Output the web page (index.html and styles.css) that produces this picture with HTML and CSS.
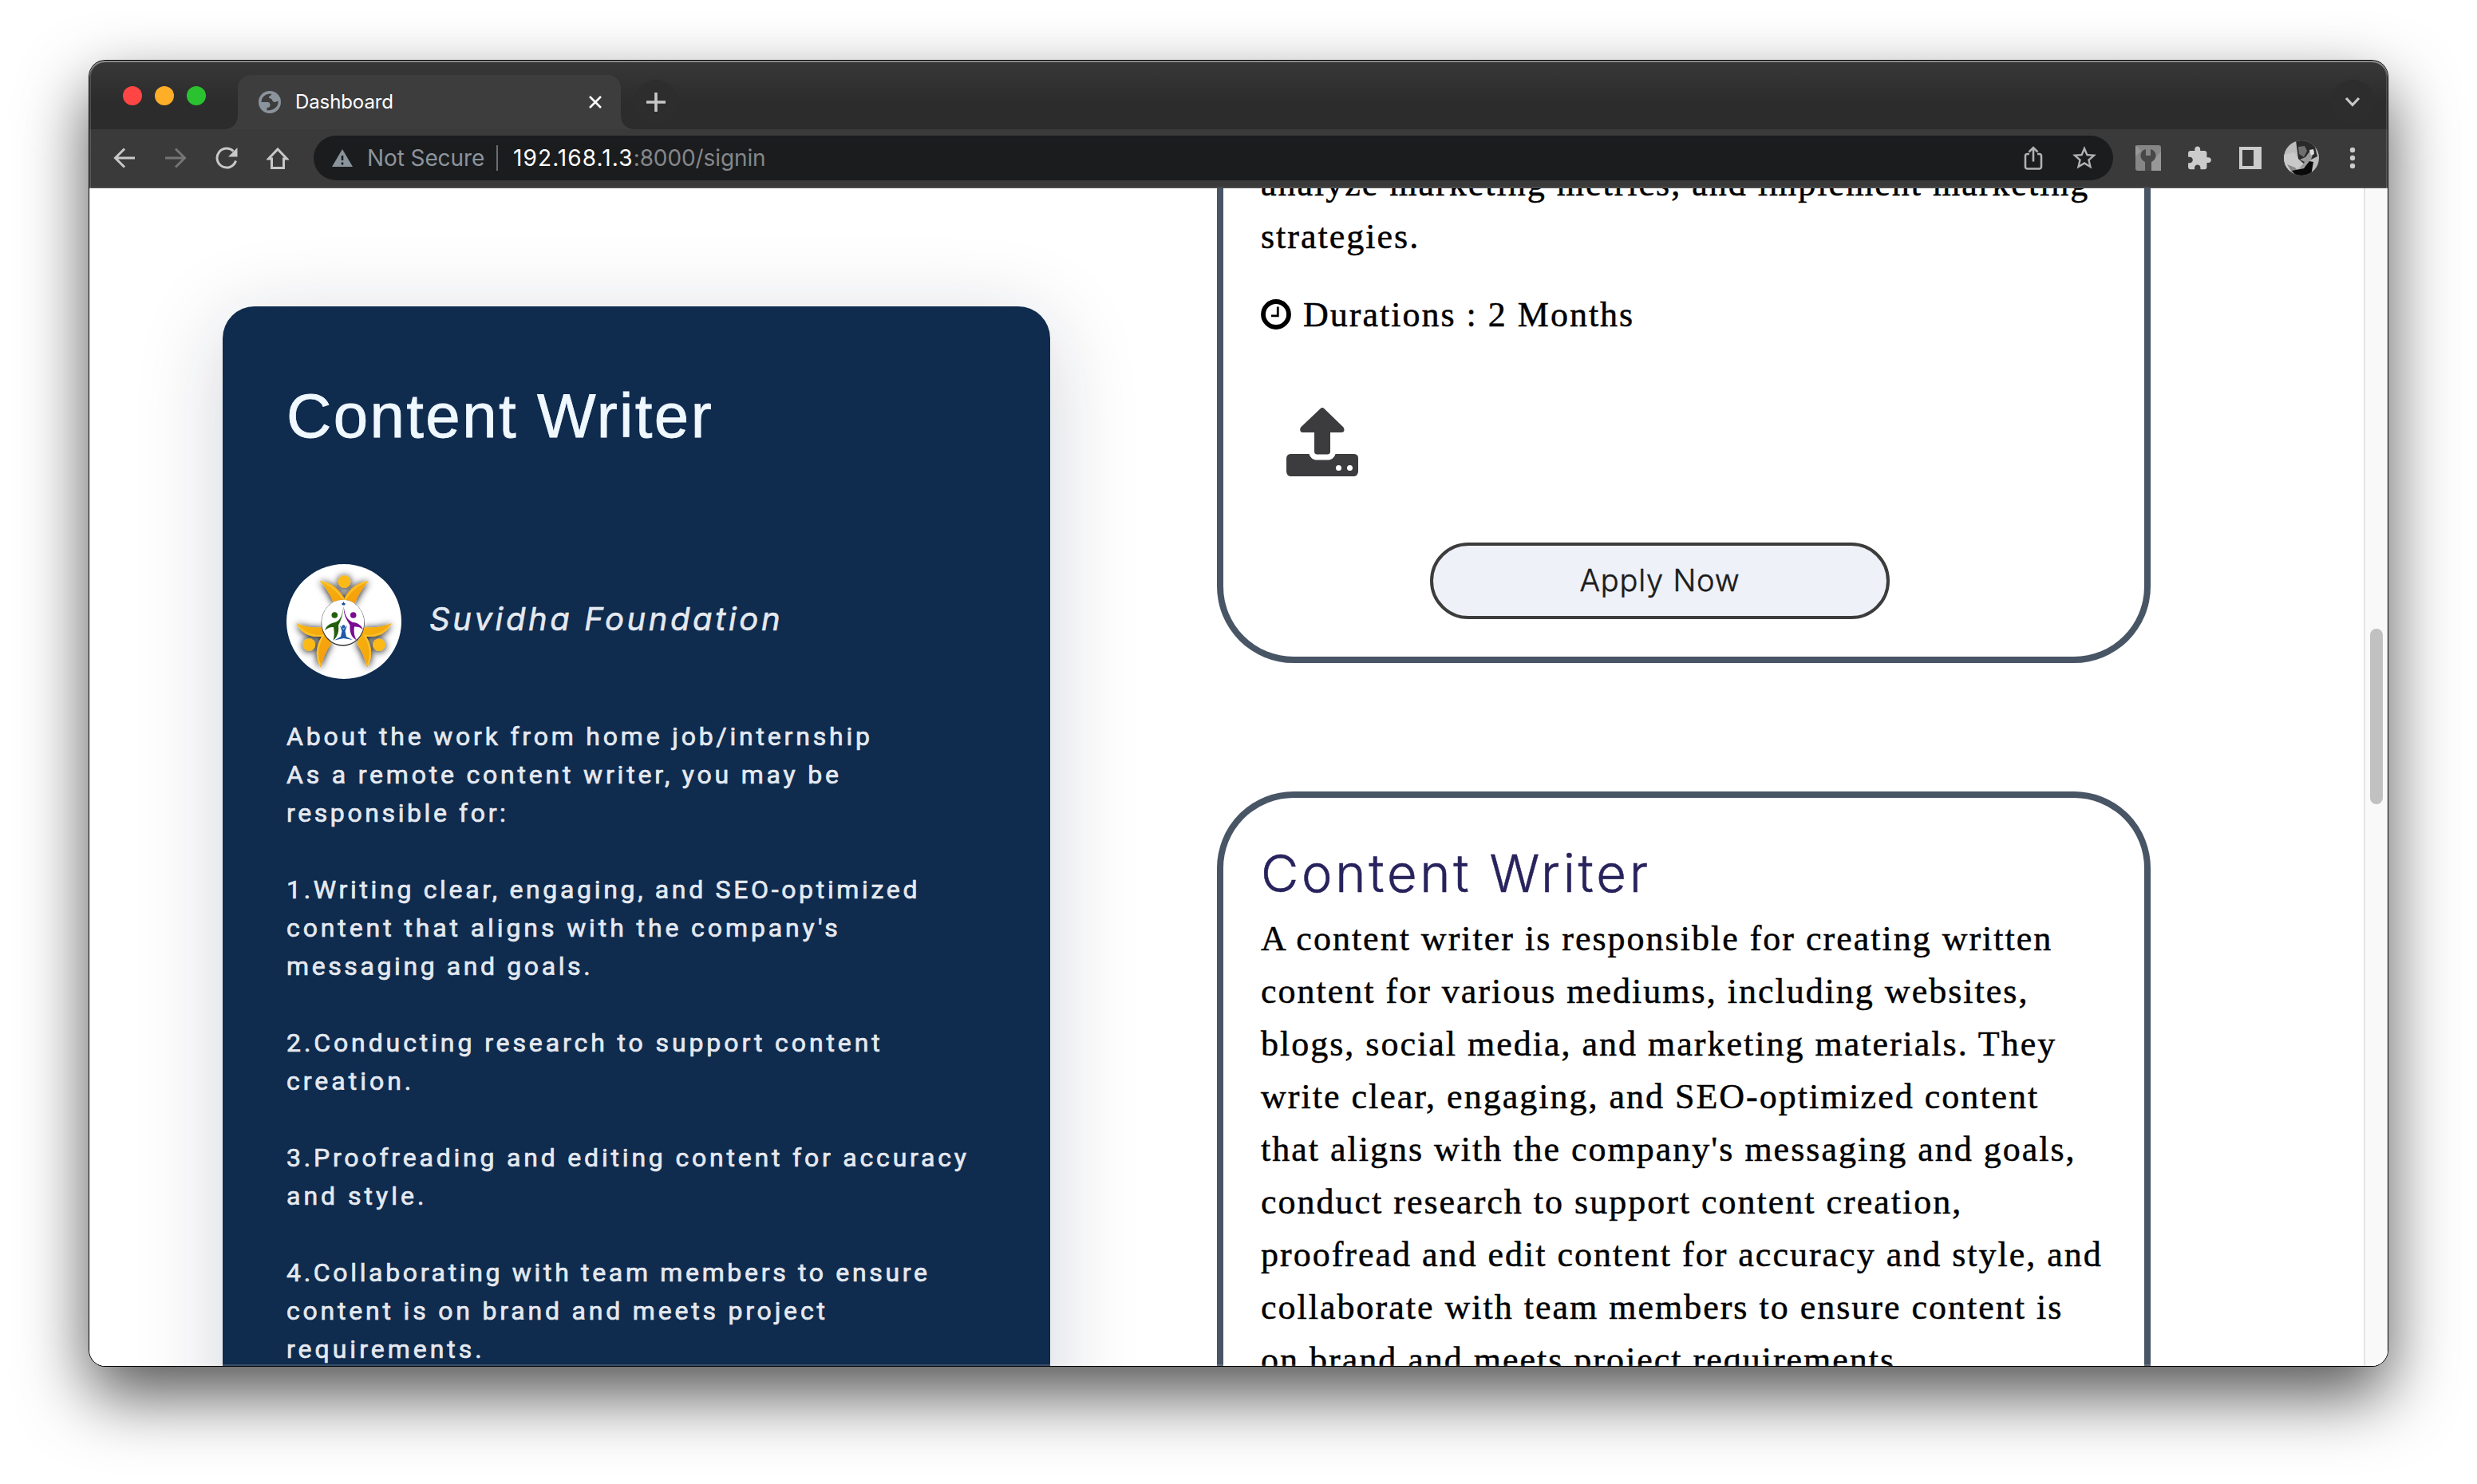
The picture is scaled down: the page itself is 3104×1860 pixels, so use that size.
FILE: index.html
```html
<!DOCTYPE html>
<html lang="en">
<head>
<meta charset="utf-8">
<title>Dashboard</title>
<link rel="stylesheet" href="styles.css">
</head>
<body>
<div class="window">
  <header class="tabstrip">
    <div class="lights"><i class="red"></i><i class="yellow"></i><i class="green"></i></div>
    <div class="tab">
      <svg class="globe" viewBox="0 0 28 28"><circle cx="14" cy="14" r="14" fill="#8b949c"/><path d="M3.500 14C3.500 8 8 3.500 16 3.500c1 2.500-3 2-3 4.500 0 2 4 1 4 3.500 1 3 4 3 7.500 1 1 6-4 12-14 12V21c2.500 0 4-1 4-3 0-3-1-4-4-4z" fill="#3c3c3c"/></svg>
      <span class="tab-title">Dashboard</span>
      <svg class="close" viewBox="0 0 16 16"><path d="M1 1l14 14M15 1L1 15" stroke="#fff" stroke-width="2.600"/></svg>
    </div>
    <div class="round plus"><svg width="24" height="24" viewBox="0 0 24 24"><path d="M12 0v24M0 12h24" stroke="#c8c8c8" stroke-width="3.600"/></svg></div>
    <div class="round chevron"><svg width="20" height="14" viewBox="0 0 20 14"><path d="M2 2l8 8.500L18 2" fill="none" stroke="#c8c8c8" stroke-width="3.200"/></svg></div>
  </header>
  <nav class="toolbar">
    <div class="slot"><svg width="28" height="28" viewBox="0 0 28 28"><path d="M27 14H3M14 2.500L2.500 14 14 25.500" fill="none" stroke="#c8c8c8" stroke-width="3"/></svg></div>
    <div class="slot"><svg width="28" height="28" viewBox="0 0 28 28"><path d="M1 14h24M14 2.500L25.500 14 14 25.500" fill="none" stroke="#757575" stroke-width="3"/></svg></div>
    <div class="slot"><svg width="28" height="28" viewBox="0 0 28 28"><path d="M25.500 17.500a12 12 0 1 1-3-12" fill="none" stroke="#c8c8c8" stroke-width="3"/><path d="M27.500 1v11.500H16z" fill="#c8c8c8"/></svg></div>
    <div class="slot"><svg width="28" height="28" viewBox="0 0 28 28"><path d="M2.500 15L14 3l11.500 12H21.500v11.500h-15V15z" fill="none" stroke="#c8c8c8" stroke-width="3"/></svg></div>
    <div class="omnibox">
      <svg class="warn" viewBox="0 0 26 22"><path d="M13 0l13 22H0z" fill="#8b949c"/><path d="M13 8v6M13 16.500v3" stroke="#1c1d1f" stroke-width="2.600"/></svg>
      <span class="insecure">Not Secure</span>
      <span class="divider"></span>
      <span class="url"><b>192.168.1.3</b>:8000/signin</span>
      <div class="slot"><svg width="24" height="30" viewBox="0 0 24 30"><path d="M7 10H4.500a2.500 2.500 0 0 0-2.500 2.500V26a2.500 2.500 0 0 0 2.500 2.500h15A2.500 2.500 0 0 0 22 26V12.500a2.500 2.500 0 0 0-2.500-2.500H17M12 19.500V3M6.500 7.500L12 2l5.500 5.500" fill="none" stroke="#b0b1b2" stroke-width="2.600"/></svg></div>
      <div class="slot"><svg width="36" height="36" viewBox="0 0 24 24"><path d="M22 9.240l-7.190-.620L12 2 9.190 8.630 2 9.240l5.460 4.730L5.820 21 12 17.270 18.180 21l-1.630-7.030L22 9.240zM12 15.400l-3.760 2.270 1-4.280-3.320-2.880 4.380-.380L12 6.100l1.710 4.040 4.380.380-3.320 2.880 1 4.280L12 15.400z" fill="#b0b1b2"/></svg></div>
    </div>
    <div class="slot"><svg width="32" height="32" viewBox="0 0 32 32"><rect width="32" height="32" rx="3" fill="#868686"/><path d="M0 0l7 7-7 7zM32 8v24H20V20z" fill="#989898"/><path d="M13 5v8h6V5c4 1 6.500 4 6.500 8 0 3.500-2 6.500-5.500 8v11h-8V21c-3.500-1.500-5.500-4.500-5.500-8 0-4 2.500-7 6.500-8z" fill="#484848"/></svg></div>
    <div class="slot"><svg width="33" height="33" viewBox="0.500 0 24 24"><path d="M20.500 11H19V7c0-1.100-.900-2-2-2h-4V3.500C13 2.120 11.880 1 10.500 1S8 2.120 8 3.500V5H4c-1.100 0-1.990.900-1.990 2v3.800H3.500c1.490 0 2.700 1.210 2.700 2.700s-1.210 2.700-2.700 2.700H2V20c0 1.100.900 2 2 2h3.800v-1.500c0-1.490 1.210-2.700 2.700-2.700s2.700 1.210 2.700 2.700V22H17c1.100 0 2-.900 2-2v-4h1.500c1.380 0 2.500-1.120 2.500-2.500S21.880 11 20.500 11z" fill="#cbcbcb"/></svg></div>
    <div class="slot"><svg width="28" height="28" viewBox="0 0 28 28"><path fill-rule="evenodd" d="M0 0h28v28H0zM4 4v20h14V4z" fill="#cbcbcb"/></svg></div>
    <div class="slot"><svg class="avatar" viewBox="0 0 44 44"><rect width="44" height="44" fill="#bdbdbd"/><path d="M15 0h18l6 8 3 12-8 4-8 6-8-7z" fill="#2a2a2a"/><path d="M18 8l8-1 3 6-4 8-6-4z" fill="#6f6f6f"/><path d="M0 18l13-3 6 10 5 5-9 6-9 4L0 34z" fill="#c9c9c9"/><path d="M4 30l10 4 6 8-10-2z" fill="#888"/><path d="M20 24l6 3-7 9 9-3 6-9 4-11-5 0-6 8z" fill="#9a9a9a"/><path d="M32 12l5-1 1 6-4 2z" fill="#ddd"/><path d="M10 38l15-3 7-9 5 1-3 17H15z" fill="#0a0a0a"/></svg></div>
    <div class="slot"><svg width="8" height="28" viewBox="0 0 8 28"><g fill="#cbcbcb"><circle cx="4" cy="4" r="3.200"/><circle cx="4" cy="14" r="3.200"/><circle cx="4" cy="24" r="3.200"/></g></svg></div>
  </nav>
  <main class="page">
    <section class="detail">
      <h1>Content Writer</h1>
      <div class="org">
        <svg class="logo" viewBox="0 0 144 144">
          <defs>
            <filter id="soft" x="-30%" y="-30%" width="160%" height="160%"><feDropShadow dx="0" dy="1" stdDeviation="5" flood-color="#000" flood-opacity="1"/></filter>
            <linearGradient id="gold" x1="0" y1="0" x2="1" y2="1"><stop offset="0" stop-color="#f6b512"/><stop offset="1" stop-color="#f59a0c"/></linearGradient>
          </defs>
          <circle cx="72" cy="72" r="72" fill="#fff"/>
          <g filter="url(#soft)">
            <g fill="#fdb913"><circle cx="72.500" cy="22" r="7.800"/><circle cx="28.300" cy="101" r="7.800"/><circle cx="116" cy="101.300" r="7.800"/></g>
            <g fill="url(#gold)">
              <path d="M41.700 21C54 22 65 30 72.500 43 79 30 91 22 103 21 96 29 90 38 86 49H59C55 38 49 29 41.700 21z"/>
              <path d="M12.300 73.700C23 79 33 80 46 79l10 21C49 109 46 119 42.700 129.700 36 117 36 104 44.500 90.500 29 93 18 86 12.300 73.700z"/>
              <path d="M131.700 73.700C121 79 111 80 98 79L88 100C95 109 98 119 101.300 129.700 108 117 108 104 99.500 90.500 115 93 126 86 131.700 73.700z"/>
            </g>
          </g>
          <g fill="none" stroke="#fcc32b" stroke-width="2">
            <path d="M43 22C55 25 64 33 72.500 46 80 33 89 25 102 22"/>
            <path d="M14 76C22 87 33 91 46 89.500 38 103 37 115 42.500 127"/>
            <path d="M130 76C122 87 111 91 98 89.500 106 103 107 115 101.500 127"/>
          </g>
          <ellipse cx="70.700" cy="73.800" rx="27.200" ry="29" fill="#333"/>
          <ellipse cx="70.700" cy="73" rx="26.600" ry="28.300" fill="#fff"/>
          <g fill="#245e0c"><circle cx="60.300" cy="64" r="3.800"/><path d="M71.300 53C71 62 69 69 65 77c1 8-1 14-6.500 19 1.500-6 1.500-10 .500-17-4-.500-7 1-11 4 2-6 7-9 13-10 6-2 9-8 10.300-20z"/></g>
          <g fill="#7a0c93"><circle cx="83.700" cy="64" r="3.800"/><path d="M71.700 53C73 64 76 70 83 73c6 0 11 4 13 9-4-3-7-4-11-3.500-1 7 0 12 3 17-7-4-9-10-8.500-19-5-8-8-13-7.800-23.500z"/></g>
          <path d="M70.500 49l1-2 1 2 1.500.500-1 2h-3l-1-2z" fill="#1a4e9e"/>
          <g fill="#1f58a8"><circle cx="71.500" cy="78.500" r="2.200"/><path d="M67 77l4.500 5 4.500-5-2.500 7 1.500 7 8 4-11.500-2L60 95.500l8-4.500 1.500-7z"/></g>
        </svg>
        <span class="org-name">Suvidha Foundation</span>
      </div>
      <div class="about">
        <div>About the work from home job/internship</div>
        <div>As a remote content writer, you may be</div>
        <div class="tight">responsible for:</div>
        <div class="gap"></div>
        <div class="snug">1.Writing clear, engaging, and SEO-optimized</div>
        <div class="loose">content that aligns with the company's</div>
        <div class="tight">messaging and goals.</div>
        <div class="gap"></div>
        <div class="loose">2.Conducting research to support content</div>
        <div class="wide">creation.</div>
        <div class="gap"></div>
        <div>3.Proofreading and editing content for accuracy</div>
        <div class="wide">and style.</div>
        <div class="gap"></div>
        <div class="snug">4.Collaborating with team members to ensure</div>
        <div>content is on brand and meets project</div>
        <div class="wide">requirements.</div>
      </div>
    </section>
    <section class="jobs">
      <article class="job previous">
        <p>analyze marketing metrics, and implement marketing<br>strategies.</p>
        <div class="duration">
          <svg width="38" height="38" viewBox="0 0 38 38"><circle cx="19" cy="19" r="16" fill="none" stroke="#000" stroke-width="5.800"/><path d="M21.300 9.500v11.300H13" fill="none" stroke="#000" stroke-width="2.800"/></svg>
          <span>Durations : 2 Months</span>
        </div>
        <svg class="upload" viewBox="0 0 90 86"><g fill="#3c3c3e"><path d="M42.500 1.200q2.500-2.200 5 0L71.500 24.500q3 6-3 6.500H55V55q0 3-3 3.500H38q-3-.500-3-3.500V31H20.500q-5-1-2.500-6.500z"/><path fill-rule="evenodd" d="M5 58h23.500C30 63 34 65.500 38 65.500H52c4 0 8-2.500 9.500-7.500H85q5 .500 5 5V80q-.500 5.500-5 6H5q-4.500-.500-5-6V63q.500-4.500 5-5zM65.500 72a3.500 3.500 0 1 0 0 7 3.500 3.500 0 0 0 0-7zm14 0a3.500 3.500 0 1 0 0 7 3.500 3.500 0 0 0 0-7z"/></g></svg>
        <button class="apply">Apply Now</button>
      </article>
      <article class="job current">
        <h2>Content Writer</h2>
        <p>A content writer is responsible for creating written<br>content for various mediums, including websites,<br>blogs, social media, and marketing materials. They<br>write clear, engaging, and SEO-optimized content<br>that aligns with the company's messaging and goals,<br>conduct research to support content creation,<br>proofread and edit content for accuracy and style, and<br>collaborate with team members to ensure content is<br>on brand and meets project requirements.</p>
      </article>
    </section>
    <div class="scrollbar"><div class="thumb"></div></div>
  </main>
</div>
</body>
</html>
```
FILE: styles.css
```css
* { box-sizing: border-box; }
body {
  margin: 0;
  width: 3104px;
  height: 1860px;
  padding: 76px 112px 148px;
  background: #fff;
  overflow: hidden;
}
svg { display: block; flex: none; }

/* Window frame */
.window {
  position: relative;
  display: flex;
  flex-direction: column;
  width: 2880px;
  height: 1636px;
  border-radius: 20px;
  overflow: hidden;
  box-shadow: 0 0 0 1px #000, 0 36px 84px rgba(0, 0, 0, .68);
}
.window::after {
  content: "";
  position: absolute;
  inset: 0;
  border-radius: 20px;
  box-shadow: inset 0 2px 0 rgba(255, 255, 255, .3), inset 0 0 0 2px rgba(255, 255, 255, .16);
  pointer-events: none;
}

/* Tab strip */
.tabstrip {
  display: flex;
  flex: none;
  height: 86px;
  background: linear-gradient(#383838, #2c2c2c 60%);
  font-family: Inter, sans-serif;
}
.lights { display: flex; gap: 16px; padding: 32px 0 0 42px; width: 186px; }
.lights i { width: 24px; height: 24px; border-radius: 50%; }
.red { background: #ff4644; }
.yellow { background: #ffae28; }
.green { background: #2bc231; }
.tab {
  position: relative;
  display: flex;
  align-items: center;
  width: 480px;
  height: 68px;
  margin-top: 18px;
  padding: 0 24px 0 26px;
  border-radius: 16px 16px 0 0;
  background: #3d3d3d;
}
.tab::before, .tab::after {
  content: "";
  position: absolute;
  bottom: 0;
  width: 16px;
  height: 16px;
}
.tab::before { right: 100%; background: radial-gradient(circle at 0 0, transparent 15.5px, #3d3d3d 16px); }
.tab::after { left: 100%; background: radial-gradient(circle at 100% 0, transparent 15.5px, #3d3d3d 16px); }
.globe { width: 28px; height: 28px; }
.tab-title { margin: 0 auto 0 18px; padding-bottom: 1px; color: #fff; font-size: 24px; letter-spacing: -.1px; }
.close { width: 16px; height: 16px; }
.round {
  display: flex;
  align-items: center;
  justify-content: center;
  width: 56px;
  height: 56px;
  margin-top: 24px;
  border-radius: 50%;
  background: #2d2d2d;
}
.plus { margin-left: 16px; }
.chevron { margin-left: auto; margin-right: 16px; }

/* Toolbar */
.toolbar {
  display: flex;
  flex: none;
  align-items: center;
  height: 74px;
  padding: 0 12px;
  background: #3a3a3a;
  border-bottom: 2px solid #4a4a4a;
  font-family: Inter, sans-serif;
}
.slot { display: flex; flex: none; align-items: center; justify-content: center; width: 64px; height: 56px; }
.omnibox {
  display: flex;
  flex: 1;
  align-items: center;
  height: 56px;
  margin: 0 12px 0 13px;
  padding: 0 4px 0 23px;
  border-radius: 28px;
  background: #1b1c1e;
  font-size: 28px;
}
.warn { width: 26px; height: 22px; }
.insecure { width: 162px; margin-left: 18px; color: #8b949c; letter-spacing: -.1px; }
.divider { width: 2px; height: 32px; margin-right: 19px; background: #6b6d70; }
.url { margin-right: auto; color: #85878a; letter-spacing: -.1px; }
.url b { font-weight: 400; color: #fff; letter-spacing: 1.1px; }
.avatar { width: 44px; height: 44px; border-radius: 50%; }

/* Page */
.page { display: flex; flex: 1; min-height: 0; overflow: hidden; background: #fff; }
.detail {
  flex: none;
  width: 1037px;
  height: 2000px;
  margin: 148px 0 0 167px;
  padding: 89px 80px 0;
  border-radius: 40px;
  background: #0f2b4e;
  box-shadow: 0 20px 110px rgba(20, 28, 58, .19);
  color: #e4e9f0;
}
h1 {
  margin: 0;
  color: #f0f8ff;
  font: 400 78px/96px "Liberation Sans", sans-serif;
  letter-spacing: 2.4px;
  -webkit-text-stroke: .8px #f0f8ff;
}
.org { display: flex; align-items: center; margin-top: 138px; }
.logo { width: 144px; height: 144px; }
.org-name {
  margin-left: 35px;
  padding-bottom: 6px;
  font: italic 400 40px/48px Inter, sans-serif;
  letter-spacing: 3.6px;
  -webkit-text-stroke: .6px currentColor;
}
.about {
  margin-top: 48px;
  font: 400 32px/48px Roboto, sans-serif;
  letter-spacing: 3.8px;
  white-space: nowrap;
  -webkit-text-stroke: .7px currentColor;
}
.about .gap { height: 48px; }
.about .wide { letter-spacing: 4px; }
.about .loose { letter-spacing: 3.9px; }
.about .snug { letter-spacing: 3.67px; }
.about .tight { letter-spacing: 3.6px; }

.jobs { flex: none; width: 1170px; margin-left: 209px; }
.job {
  display: flow-root;
  border: 8px solid #485565;
  border-radius: 96px;
  padding: 0 0 0 47px;
  color: #000;
  font: 400 44px/66px "Liberation Serif", serif;
  letter-spacing: 2px;
  white-space: nowrap;
  -webkit-text-stroke: .5px currentColor;
}
.job p { margin: 0; }
.previous { height: 595px; border-top: 0; border-radius: 0 0 96px 96px; }
.previous p { margin-top: -38px; }
.duration { display: flex; align-items: center; margin-top: 32px; gap: 15px; }
.duration svg { margin-top: -2px; }
.upload { width: 90px; height: 86px; margin: 83px 0 0 32px; }
.apply {
  display: block;
  width: 576px;
  height: 96px;
  margin: 83px 0 0 212px;
  padding: 0 0 2px;
  border: 4px solid #3c3c3c;
  border-radius: 48px;
  background: #eef1f7;
  color: #1c1c1c;
  font: 300 38px Inter, sans-serif;
  letter-spacing: .8px;
}
.current { height: 1100px; margin-top: 161px; padding-top: 47px; }
.current p { margin-top: 1px; }
h2 {
  margin: 0;
  color: #28235c;
  font: 300 65px/96px Inter, sans-serif;
  letter-spacing: 3.75px;
}

.scrollbar {
  flex: none;
  width: 30px;
  margin-left: auto;
  padding: 552px 6px 0 6px;
  border-left: 2px solid #e4e4e4;
  background: #f9f9f9;
}
.thumb { height: 220px; width: 16px; border-radius: 8px; background: #c1c1c1; }
```
